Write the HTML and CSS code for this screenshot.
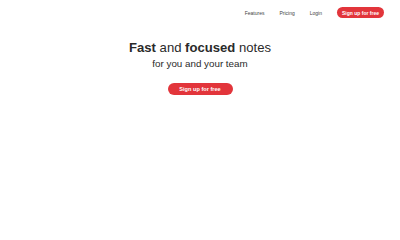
FILE: index.html
```html
<!DOCTYPE html>
<html>
<head>
<meta charset="utf-8">
<link rel="stylesheet" href="styles.css">
</head>
<body>
<header class="topbar">
  <nav class="nav">
    <a class="nav-link" href="#">Features</a>
    <a class="nav-link" href="#">Pricing</a>
    <a class="nav-link" href="#">Login</a>
    <a class="btn btn-small" href="#">Sign up for free</a>
  </nav>
</header>
<main class="hero">
  <h1 class="title"><b>Fast</b> and <b>focused</b> notes</h1>
  <p class="subtitle">for you and your team</p>
  <a class="btn btn-large" href="#">Sign up for free</a>
</main>
</body>
</html>
```
FILE: styles.css
```css
html, body {
  margin: 0;
  padding: 0;
  background: #ffffff;
  font-family: "Liberation Sans", Arial, sans-serif;
  color: #333333;
}
a { text-decoration: none; }
.topbar {
  display: flex;
  justify-content: flex-end;
  padding: 7px 16px 0 0;
}
.nav {
  display: flex;
  align-items: center;
  gap: 15px;
}
.nav-link {
  font-size: 5px;
  color: #444;
}
.btn {
  display: inline-flex;
  align-items: center;
  justify-content: center;
  background: #e2353b;
  color: #fff;
  font-weight: bold;
  border-radius: 999px;
}
.btn-small {
  width: 47px;
  height: 11px;
  font-size: 5px;
}
.hero {
  display: flex;
  flex-direction: column;
  align-items: center;
  padding-top: 22px;
}
.title {
  margin: 0;
  font-size: 13.1px;
  font-weight: normal;
  color: #2a2a2a;
  line-height: 16px;
}
.title b { font-weight: bold; }
.subtitle {
  margin: 1px 0 0 0;
  font-size: 9.8px;
  line-height: 13px;
  color: #2a2a2a;
}
.btn-large {
  margin-top: 13px;
  width: 65px;
  height: 12px;
  font-size: 5.6px;
}
```
